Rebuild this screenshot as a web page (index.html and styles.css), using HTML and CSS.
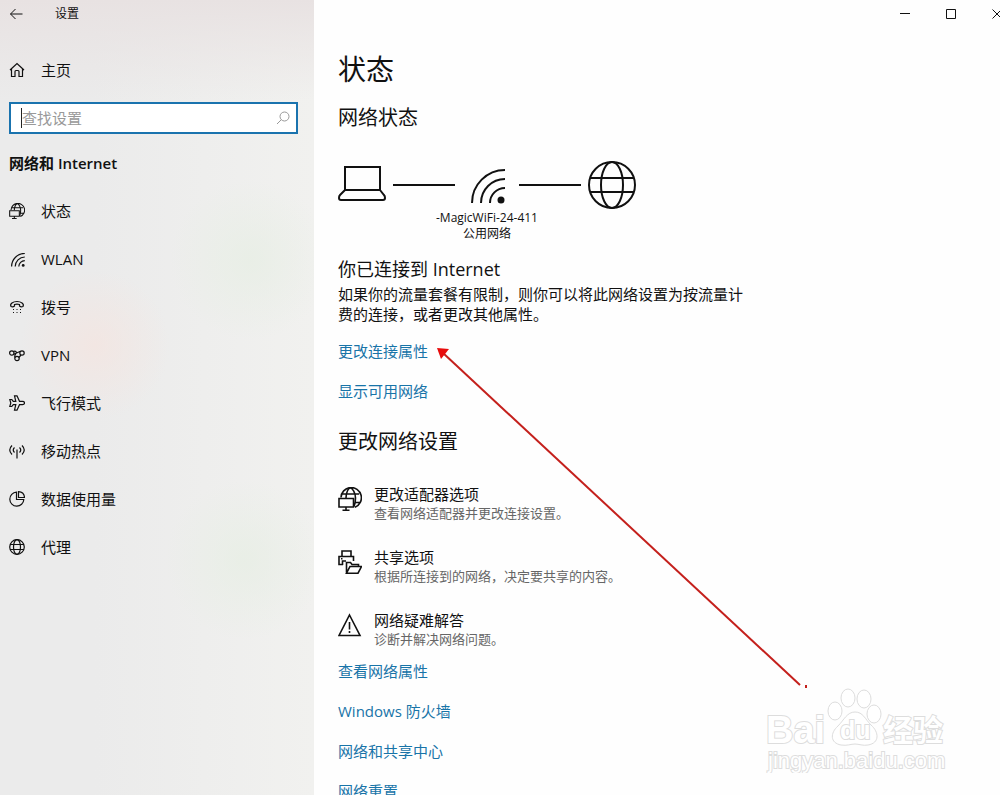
FILE: index.html
```html
<!DOCTYPE html>
<html lang="zh-CN">
<head>
    <meta charset="UTF-8">
    <meta name="viewport" content="width=device-width, initial-scale=1.0">
    <title>设置</title>
    <link rel="stylesheet" href="styles.css">
</head>
<body>
    <!-- Shared icons -->
    <svg class="sprite" aria-hidden="true">
        <symbol id="globe" viewBox="0 0 48 48">
            <circle cx="24" cy="24" r="23"/>
            <ellipse cx="24" cy="24" rx="11" ry="23"/>
            <path d="M2 17h44M2 31h44"/>
        </symbol>
        <symbol id="wifi" viewBox="0 0 34 35">
            <path d="M1 34A33 33 0 0 1 34 1M10 34a24 24 0 0 1 24-24M19 34a15 15 0 0 1 15-15"/>
            <circle class="solid" cx="30" cy="31" r="3.5"/>
        </symbol>
        <symbol id="adapter" viewBox="0 0 24 24">
            <path d="M3 10.500A10.200 10.200 0 1 1 17 20.200M8 11C8 5 10.500 1 12.500 1S17.500 6 17.500 11c0 4-.5 6-1.500 8.500M4.500 7h16.500M17 15.500h5"/>
            <path d="M1 11.500h14.500v8.500H1zM8 20v3.200M4.500 23.200h7"/>
        </symbol>
    </svg>

    <div class="window">
        <aside class="sidebar">
            <div class="titlebar">
                <button class="back" aria-label="返回">
                    <svg class="icon" width="14" height="12" viewBox="0 0 14 12"><path d="M6.500 1L1.500 6l5 5M1.500 6h12"/></svg>
                </button>
                <span>设置</span>
            </div>

            <a class="nav-item" href="#home">
                <svg class="icon" viewBox="0 0 16 16"><path d="M1 8l7-6.500L15 8M2.500 7v7.500H6V9.500q0-1 1-1h2q1 0 1 1v5h3.500V7"/></svg>
                主页
            </a>

            <div class="search">
                <input type="text" placeholder="查找设置" aria-label="查找设置">
                <svg class="icon" viewBox="0 0 14 14"><circle cx="8.500" cy="5.500" r="4.500"/><path d="M5.300 8.700L1 13"/></svg>
            </div>

            <h2 class="nav-title">网络和 Internet</h2>

            <nav>
                <a class="nav-item" href="#status">
                    <svg class="icon adapter"><use href="#adapter"/></svg>
                    状态
                </a>
                <a class="nav-item" href="#wlan">
                    <svg class="icon wlan"><use href="#wifi"/></svg>
                    WLAN
                </a>
                <a class="nav-item" href="#dialup">
                    <svg class="icon" viewBox="0 0 16 16">
                        <path d="M2 7.500C.5 5 4 2.500 8 2.500S15.500 5 14 7.500q-2 .8-3.500-.5V5.500q-2.500-.8-5 0V7Q4 8.300 2 7.500z"/>
                        <path d="M4 10.500h1M7.500 10.500h1M11 10.500h1M4 13.500h1M7.500 13.500h1M11 13.500h1"/>
                    </svg>
                    拨号
                </a>
                <a class="nav-item" href="#vpn">
                    <svg class="icon" viewBox="0 0 16 16">
                        <circle cx="2.800" cy="6" r="2.200"/><circle cx="13" cy="6" r="2.200"/><circle cx="8" cy="11.500" r="2.200"/>
                        <path d="M4.500 4.500C6.500 3.500 8 5 7 6.500S5 8.500 6 10.500M4.700 7.200L11.500 4.300M12 8L9.800 10.500"/>
                    </svg>
                    VPN
                </a>
                <a class="nav-item" href="#airplane">
                    <svg class="icon" viewBox="0 0 16 16"><path d="M15.500 8q0-1.700-2-1.700h-3L8 .8H5.500l1.300 5.500H4.300L2.800 4.500H.8L1.800 8l-1 3.500h2l1.500-1.800h2.500L5.500 15.200H8l2.500-5.500h3q2 0 2-1.700z"/></svg>
                    飞行模式
                </a>
                <a class="nav-item" href="#hotspot">
                    <svg class="icon" viewBox="0 0 16 16"><path d="M3 2.500q-4.500 4.500 0 9M5.500 4.500q-2.500 2.500 0 5M10.500 4.500q2.500 2.500 0 5M13 2.500q4.500 4.500 0 9M8 6.500v9"/></svg>
                    移动热点
                </a>
                <a class="nav-item" href="#usage">
                    <svg class="icon" viewBox="0 0 16 16"><path d="M7.500 1.200A7 7 0 1 0 14.800 8.500H7.500zM9.500.7V6.500h6Q15.300 1.300 9.500.7z"/></svg>
                    数据使用量
                </a>
                <a class="nav-item" href="#proxy">
                    <svg class="icon" viewBox="0 0 16 16"><circle cx="8" cy="8" r="7.300"/><ellipse cx="8" cy="8" rx="3.500" ry="7.300"/><path d="M1 5.500h14M1 10.500h14"/></svg>
                    代理
                </a>
            </nav>
        </aside>

        <main class="content">
            <div class="controls">
                <button aria-label="最小化"><svg class="icon" viewBox="0 0 10 10"><path d="M0 4.500h10"/></svg></button>
                <button aria-label="最大化"><svg class="icon" viewBox="0 0 10 10"><path d="M.5.5h9v9h-9z"/></svg></button>
                <button aria-label="关闭"><svg class="icon" viewBox="0 0 10 10"><path d="M.5.5l9 9M9.500.5l-9 9"/></svg></button>
            </div>

            <h1>状态</h1>
            <h2>网络状态</h2>

            <div class="diagram">
                <div class="diagram-row">
                    <svg class="device" viewBox="0 0 48 48"><path d="M7 6h35v23H7zM7 29l-5 5q-1 1-1 3 0 2 2 2h42q2 0 2-2 0-2-1-3l-4-5"/></svg>
                    <span class="wire"></span>
                    <svg class="device signal"><use href="#wifi" x="9" y="8" width="34" height="35"/></svg>
                    <span class="wire"></span>
                    <svg class="device"><use href="#globe"/></svg>
                </div>
                <p>-MagicWiFi-24-411<br>公用网络</p>
            </div>

            <h3>你已连接到 Internet</h3>
            <p class="message">如果你的流量套餐有限制，则你可以将此网络设置为按流量计费的连接，或者更改其他属性。</p>

            <div class="links">
                <a href="#properties">更改连接属性</a>
                <a href="#available">显示可用网络</a>
            </div>

            <h2 class="change-title">更改网络设置</h2>

            <div class="options">
                <a class="option" href="#adapter-options">
                    <svg class="icon"><use href="#adapter"/></svg>
                    <span><b>更改适配器选项</b><small>查看网络适配器并更改连接设置。</small></span>
                </a>
                <a class="option" href="#sharing">
                    <svg class="icon" viewBox="0 0 24 24"><path d="M4 6.500V1h9v5.500M5 14.500H1v-8h14.500V11M4.500 15V11H8M3 8.800h1.500"/><path d="M8.500 22.500V12.500h4l1.500 2h6.500V17M8.500 23.200l3.500-6.700h11.500l-3.500 6.700z"/></svg>
                    <span><b>共享选项</b><small>根据所连接到的网络，决定要共享的内容。</small></span>
                </a>
                <a class="option" href="#troubleshoot">
                    <svg class="icon" viewBox="0 0 24 24"><path d="M11.500 2L22 22.500H1zM11.500 9v7.500M11.500 18v2"/></svg>
                    <span><b>网络疑难解答</b><small>诊断并解决网络问题。</small></span>
                </a>
            </div>

            <div class="links">
                <a href="#view-properties">查看网络属性</a>
                <a href="#firewall">Windows 防火墙</a>
                <a href="#sharing-center">网络和共享中心</a>
                <a href="#reset">网络重置</a>
            </div>

            <!-- Red pointer to the connection properties link -->
            <svg class="pointer" viewBox="0 0 372 342" aria-hidden="true">
                <path class="line" d="M6 6L363 338"/>
                <path class="head" d="M0 1l12 1-8 10z"/>
                <path class="line" d="M369 338v3"/>
            </svg>

            <svg class="watermark" viewBox="0 0 184 92" aria-hidden="true">
                <ellipse cx="70" cy="30" rx="7" ry="9"/>
                <ellipse cx="83" cy="17" rx="7" ry="9"/>
                <ellipse cx="99" cy="18" rx="7" ry="9"/>
                <ellipse cx="109" cy="33" rx="7" ry="9"/>
                <path d="M90 31c8 0 10 7 16 13 8 7 9 18-3 20-5 1-9-1-13-1s-8 2-14 1c-11-2-11-12-3-19 6-6 9-14 17-14z"/>
                <text class="brand" x="1" y="62">Bai</text>
                <text class="du" x="75" y="58">du</text>
                <text class="cjk" x="118" y="60">经验</text>
                <text class="site" x="3" y="87">jingyan.baidu.com</text>
            </svg>
        </main>
    </div>
</body>
</html>
```

FILE: styles.css
```css
* { box-sizing: border-box; }
body { margin: 0; font-family: "Open Sans", "Noto Sans CJK SC", sans-serif; font-size: 15px; line-height: 20px; color: #111; background: #fefefe; }
h1, h2, h3, p { margin: 0; font-weight: 400; }
a { color: inherit; text-decoration: none; }
button { border: 0; padding: 0; background: none; color: inherit; display: flex; align-items: center; justify-content: center; }
svg { fill: none; stroke: currentColor; flex-shrink: 0; }
.solid { fill: currentColor; stroke: none; }
.sprite { position: absolute; width: 0; height: 0; }

.window { display: flex; height: 100vh; overflow: hidden; }

/* Sidebar */
.sidebar {
    width: 314px;
    flex-shrink: 0;
    background:
        radial-gradient(circle at 95px 345px, rgba(245, 228, 223, 0.7), transparent 75px),
        radial-gradient(circle at 250px 260px, rgba(230, 238, 227, 0.7), transparent 80px),
        radial-gradient(circle at 245px 560px, rgba(230, 238, 227, 0.7), transparent 80px),
        linear-gradient(#e8e2e2, rgba(236, 234, 234, 0) 100px),
        linear-gradient(90deg, #ebebeb 30%, #f1f1ef);
}
.titlebar { display: flex; align-items: center; height: 28px; padding-left: 9px; font-size: 12px; }
.back { width: 14px; margin-right: 32px; }
.nav-item { display: flex; align-items: center; gap: 16px; height: 48px; padding-left: 9px; }
.nav-item .icon { width: 16px; height: 16px; stroke-width: 1.2; }
.nav-item .wlan { padding: 2px 0 0 2px; stroke-width: 3; }
.nav-item .adapter { stroke-width: 1.6; }
.titlebar + .nav-item { margin-top: 18px; }
.search { position: relative; margin: 8px 16px 0 9px; }
.search input { display: block; width: 100%; height: 32px; border: 2px solid #1a73ae; border-radius: 0; padding: 0 36px 0 11px; background: #fff; font: inherit; outline: 0; }
.search input::placeholder { color: #999; opacity: 1; }
.search::before { content: ""; position: absolute; left: 12px; top: 6px; width: 1px; height: 20px; background: #222; }
.search .icon { position: absolute; right: 8px; top: 9px; width: 14px; height: 14px; color: #999; }
.nav-title { font-size: 15px; font-weight: 600; margin: 19px 0 14px 9px; }

/* Content */
.content { position: relative; flex: 1; min-width: 0; padding-left: 24px; overflow: hidden; }
.controls { display: flex; justify-content: flex-end; height: 28px; margin-right: -20px; }
.controls button { width: 46px; }
.controls .icon { width: 10px; height: 10px; }
h1 { margin-top: 21px; font-size: 28px; line-height: 40px; }
.content h2 { margin-top: 15px; font-size: 20px; line-height: 28px; }
.diagram { width: 298px; margin-top: 29px; font-size: 12px; line-height: 16px; text-align: center; }
.diagram-row { display: flex; align-items: center; gap: 7px; margin-bottom: 1px; }
.device { width: 48px; height: 48px; stroke-width: 2; }
.device.signal { width: 50px; }
.wire { flex: 1; height: 2px; background: #111; }
h3 { margin-top: 15px; font-size: 18px; line-height: 24px; }
.message { max-width: 410px; margin-top: 3px; }
.links { display: flex; flex-direction: column; align-items: flex-start; gap: 20px; margin-top: 17px; color: #1874a8; }
.content .change-title { margin-top: 27px; }
.options { display: flex; flex-direction: column; gap: 25px; margin-top: 28px; }
.option { display: flex; gap: 12px; }
.option .icon { width: 24px; height: 24px; margin-top: 3px; stroke-width: 1.6; }
.option b, .option small { display: block; font-weight: 400; }
.option small { font-size: 13px; line-height: 18px; color: #666; }
.options + .links { margin-top: 13px; }

/* Overlays */
.pointer { position: absolute; left: 123px; top: 347px; width: 372px; height: 342px; }
.pointer .line { stroke: #c4201c; stroke-width: 2; }
.pointer .head { fill: #e80c0c; stroke: none; }
.watermark { position: absolute; right: 51px; bottom: 22px; width: 184px; height: 92px; fill: #fff; stroke: #ddd; font-weight: 700; }
.watermark text { paint-order: stroke; stroke-width: 2; font-family: "Liberation Sans", sans-serif; }
.watermark .brand { font-size: 38px; }
.watermark .du { font-size: 25px; }
.watermark .cjk { font-family: "Noto Sans CJK SC", sans-serif; font-size: 30px; }
.watermark .site { font-size: 22px; font-weight: 400; }
```
